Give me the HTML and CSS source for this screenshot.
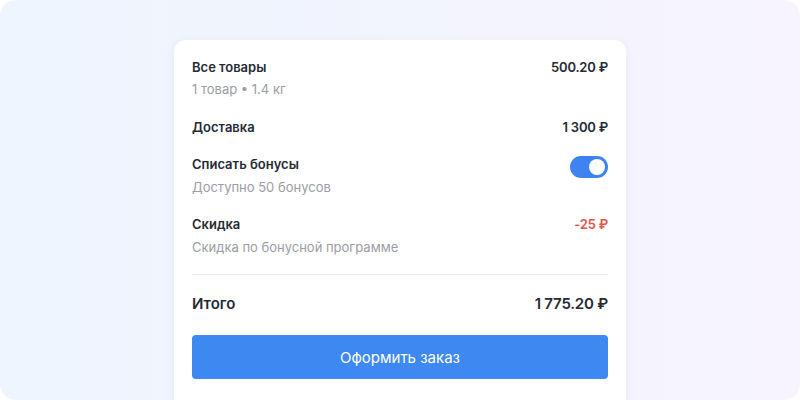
FILE: index.html
```html
<!DOCTYPE html>
<html lang="ru">
<head>
<meta charset="utf-8">
<link rel="stylesheet" href="styles.css">
</head>
<body>
<div class="stage">
  <div class="card">
    <div class="rows">
      <div class="row">
        <div class="info">
          <div class="title">Все товары</div>
          <div class="sub">1 товар • 1.4 кг</div>
        </div>
        <div class="value">500.20 ₽</div>
      </div>
      <div class="row row-single">
        <div class="info">
          <div class="title">Доставка</div>
        </div>
        <div class="value">1 300 ₽</div>
      </div>
      <div class="row">
        <div class="info">
          <div class="title">Списать бонусы</div>
          <div class="sub">Доступно 50 бонусов</div>
        </div>
        <div class="toggle"><span class="knob"></span></div>
      </div>
      <div class="row">
        <div class="info">
          <div class="title">Скидка</div>
          <div class="sub">Скидка по бонусной программе</div>
        </div>
        <div class="value red">-25 ₽</div>
      </div>
    </div>
    <div class="divider"></div>
    <div class="total">
      <div class="total-label">Итого</div>
      <div class="total-value">1 775.20 ₽</div>
    </div>
    <button class="btn">Оформить заказ</button>
  </div>
</div>
</body>
</html>
```
FILE: styles.css
```css
* { box-sizing: border-box; }
html, body { margin: 0; padding: 0; background: #ffffff; }
body { font-family: Inter, "Noto Sans", sans-serif; }
.stage {
  width: 800px;
  height: 400px;
  border-radius: 16px;
  background: linear-gradient(90deg, #eef5fe 0%, #f2f4fe 50%, #f7f4fe 100%);
  display: flex;
  justify-content: center;
  padding-top: 40px;
  overflow: hidden;
}
.card {
  width: 452px;
  height: 420px;
  background: #ffffff;
  border-radius: 12px;
  box-shadow: 0 2px 10px rgba(80, 90, 130, 0.08);
  padding: 18px 18px;
}
.rows { display: flex; flex-direction: column; gap: 19px; }
.row { display: flex; justify-content: space-between; align-items: flex-start; }
.row-single { margin-top: 1px; }
.title {
  font-size: 13px;
  line-height: 18px;
  font-weight: 600;
  color: #262a33;
}
.sub {
  margin-top: 4px;
  font-size: 13px;
  line-height: 18px;
  color: #9a9da4;
}
.row + .row .sub { margin-top: 5px; }
.value {
  font-size: 13px;
  line-height: 18px;
  font-weight: 600;
  color: #262a33;
  letter-spacing: -0.2px;
}
.value.red { color: #e2534a; }
.toggle {
  width: 38px;
  height: 22px;
  border-radius: 11px;
  background: #3d84f0;
  margin-top: 1px;
  display: flex;
  align-items: center;
  justify-content: flex-end;
  padding-right: 3px;
}
.knob {
  width: 16px;
  height: 16px;
  border-radius: 50%;
  background: #ffffff;
}
.divider {
  height: 1px;
  background: #e8e9ec;
  margin: 18px 0 18px;
}
.total { display: flex; justify-content: space-between; align-items: center; }
.total-label {
  font-size: 15px;
  line-height: 22px;
  font-weight: 600;
  color: #262a33;
}
.total-value {
  font-size: 15px;
  line-height: 22px;
  font-weight: 600;
  color: #262a33;
  letter-spacing: -0.2px;
}
.btn {
  display: block;
  width: 100%;
  height: 44px;
  margin-top: 20px;
  border: 0;
  border-radius: 4px;
  background: #3d88f1;
  color: #ffffff;
  font-family: Inter, "Noto Sans", sans-serif;
  font-size: 15px;
  font-weight: 400;
}
```
